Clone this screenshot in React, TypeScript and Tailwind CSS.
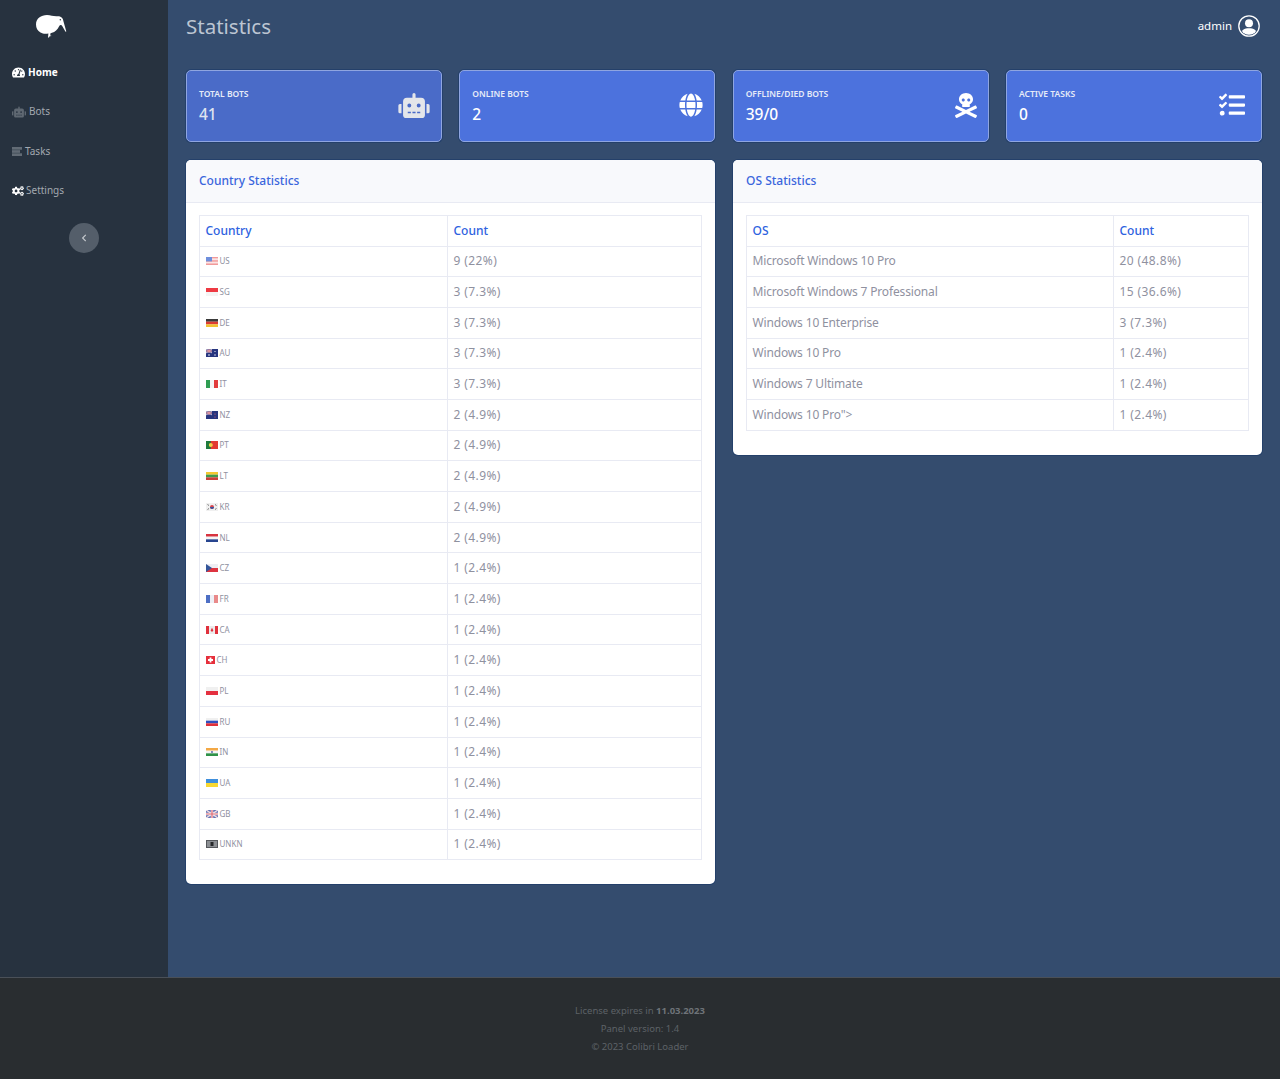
import type { ReactNode } from 'react';
import { FaTachometerAlt, FaRobot, FaCogs, FaChevronLeft, FaGlobe, FaSkullCrossbones, FaTasks } from 'react-icons/fa';

const countries = [
  ['US', '9 (22%)'],
  ['SG', '3 (7.3%)'],
  ['DE', '3 (7.3%)'],
  ['AU', '3 (7.3%)'],
  ['IT', '3 (7.3%)'],
  ['NZ', '2 (4.9%)'],
  ['PT', '2 (4.9%)'],
  ['LT', '2 (4.9%)'],
  ['KR', '2 (4.9%)'],
  ['NL', '2 (4.9%)'],
  ['CZ', '1 (2.4%)'],
  ['FR', '1 (2.4%)'],
  ['CA', '1 (2.4%)'],
  ['CH', '1 (2.4%)'],
  ['PL', '1 (2.4%)'],
  ['RU', '1 (2.4%)'],
  ['IN', '1 (2.4%)'],
  ['UA', '1 (2.4%)'],
  ['GB', '1 (2.4%)'],
  ['UNKN', '1 (2.4%)'],
];

const systems = [
  ['Microsoft Windows 10 Pro', '20 (48.8%)'],
  ['Microsoft Windows 7 Professional', '15 (36.6%)'],
  ['Windows 10 Enterprise', '3 (7.3%)'],
  ['Windows 10 Pro', '1 (2.4%)'],
  ['Windows 7 Ultimate', '1 (2.4%)'],
  ['Windows 10 Pro">', '1 (2.4%)'],
];

function hStripes(colors: string[]) {
  const h = 8 / colors.length;
  return colors.map((c, i) => <rect key={i} x="0" y={i * h} width="12" height={h + 0.05} fill={c} />);
}

function vStripes(colors: string[]) {
  const w = 12 / colors.length;
  return colors.map((c, i) => <rect key={i} x={i * w} y="0" width={w + 0.05} height="8" fill={c} />);
}

function UnionCorner() {
  return (
    <g>
      <rect x="0" y="0" width="6" height="4" fill="#5a6aa8" />
      <path d="M0 0L6 4M6 0L0 4" stroke="#f3d5d8" strokeWidth="0.7" />
      <path d="M3 0V4M0 2H6" stroke="#e58a90" strokeWidth="1" />
    </g>
  );
}

const flags: Record<string, ReactNode> = {
  US: (
    <>
      {hStripes(['#f19a9a', '#fbe3e3', '#f19a9a', '#fbe3e3', '#f19a9a'])}
      <rect width="6" height="4.4" fill="#6f8fdc" />
    </>
  ),
  SG: hStripes(['#ee3a43', '#f4f4f4']),
  DE: hStripes(['#3a3a3a', '#dc3c32', '#f2c230']),
  AU: (
    <>
      <rect width="12" height="8" fill="#27357f" />
      <UnionCorner />
      <circle cx="9" cy="2.5" r="0.6" fill="#fff" />
      <circle cx="9" cy="6" r="0.7" fill="#fff" />
      <circle cx="3" cy="6" r="0.8" fill="#fff" />
    </>
  ),
  IT: vStripes(['#2f9d52', '#f4f4f4', '#e23c3c']),
  NZ: (
    <>
      <rect width="12" height="8" fill="#27357f" />
      <UnionCorner />
      <circle cx="9" cy="3" r="0.6" fill="#e8686d" />
      <circle cx="9" cy="6" r="0.6" fill="#e8686d" />
    </>
  ),
  PT: (
    <>
      <rect width="12" height="8" fill="#e23b32" />
      <rect width="4.8" height="8" fill="#1f7a3c" />
      <circle cx="4.8" cy="4" r="2" fill="#f0cf4a" />
    </>
  ),
  LT: hStripes(['#f4c82f', '#3f9a4e', '#c8403a']),
  KR: (
    <>
      <rect width="12" height="8" fill="#f0f0f0" />
      <circle cx="6" cy="4" r="2" fill="#d9434c" />
      <path d="M4 4a2 2 0 0 0 4 0z" fill="#38549c" />
      <path d="M1.5 1.5l1.5 1M9 6.5l1.5-1M1.5 6.5l1.5-1M9 1.5l1.5 1" stroke="#555" strokeWidth="0.8" />
    </>
  ),
  NL: hStripes(['#d8333f', '#f4f4f4', '#27458f']),
  CZ: (
    <>
      {hStripes(['#eeeef3', '#dd3340'])}
      <path d="M0 0L6 4L0 8z" fill="#34569a" />
    </>
  ),
  FR: vStripes(['#4e6fc4', '#eef0f6', '#e98a8a']),
  CA: (
    <>
      {vStripes(['#e0313c', '#ececec', '#ececec', '#e0313c'])}
      <path d="M6 1.8l1.4 2.6L6 6 4.6 4.4z" fill="#e0313c" />
    </>
  ),
  PL: hStripes(['#f0f0f0', '#e4303f']),
  RU: hStripes(['#f0f0f0', '#2e4fc0', '#e0303a']),
  IN: (
    <>
      {hStripes(['#f3a845', '#f4f4f4', '#2f9248'])}
      <circle cx="6" cy="4" r="0.9" fill="#4a5aa0" />
    </>
  ),
  UA: hStripes(['#3f8fdc', '#f8d830']),
  GB: (
    <>
      <rect width="12" height="8" fill="#6273b4" />
      <path d="M0 0L12 8M12 0L0 8" stroke="#f2dfe2" strokeWidth="1.4" />
      <path d="M6 0V8M0 4H12" stroke="#f5f0f2" strokeWidth="2.4" />
      <path d="M6 0V8M0 4H12" stroke="#de6a75" strokeWidth="1.2" />
    </>
  ),
  UNKN: (
    <>
      <rect width="12" height="8" fill="#55585c" />
      <rect x="1" y="1" width="10" height="6" fill="#8c8f93" />
      <rect x="4.5" y="2" width="3" height="4" fill="#26282a" />
    </>
  ),
};

function Flag({ code }: { code: string }) {
  if (code === 'CH') {
    return (
      <svg viewBox="0 0 9 8" className="h-2 w-[9px] blur-[0.4px]">
        <rect width="9" height="8" fill="#e6303c" />
        <path d="M3.6 1.5h1.8v1.6H7v1.8H5.4v1.6H3.6V4.9H2V3.1h1.6z" fill="#fff" />
      </svg>
    );
  }
  return (
    <svg viewBox="0 0 12 8" className="h-2 w-3 blur-[0.4px]">
      {flags[code]}
    </svg>
  );
}

function KiwiLogo() {
  return (
    <svg viewBox="0 0 31 24" className="h-6 w-[31px]" fill="#fff">
      <path d="M0 10.500C0 4.500 5 1 11 1C15 1 17 2.500 21 2.300C24.500 2 27 3.500 27.500 7.500L30.300 17.500L29.500 17.800L26.500 12.500C25.300 10.500 24 10.800 23 12.500C21.500 15.500 19 18 16 18.800L14.500 19.200L14.200 21.500L15.800 22L13.600 22.300L13 23.500L12 23.500L12.400 19.500C9.500 19.800 7 20 4.500 18.500C1.500 16.800 0 14 0 10.500Z" />
      <circle cx="24.300" cy="5.800" r="0.700" fill="#27323f" />
    </svg>
  );
}

function UserAvatar() {
  return (
    <svg viewBox="0 0 22 22" className="h-[22px] w-[22px]">
      <defs>
        <clipPath id="avatar-clip">
          <circle cx="11" cy="11" r="8.800" />
        </clipPath>
      </defs>
      <circle cx="11" cy="11" r="10.200" fill="none" stroke="#fff" strokeWidth="1.300" />
      <g clipPath="url(#avatar-clip)" fill="#fff">
        <circle cx="11" cy="8.300" r="4" />
        <path d="M2 22C2 15.500 6 13.300 11 13.300C16 13.300 20 15.500 20 22Z" />
      </g>
    </svg>
  );
}

function TasksBars() {
  return (
    <svg viewBox="0 0 10 9" className="h-[9px] w-[10px]" fill="#626b75">
      <rect x="0" y="0" width="10" height="2.700" />
      <rect x="0" y="3.150" width="8" height="2.700" />
      <rect x="0" y="6.300" width="10" height="2.700" />
    </svg>
  );
}

function NavItem({ icon, label, active, gap }: { icon: ReactNode; label: string; active?: boolean; gap: string }) {
  return (
    <div className={`flex h-[39.3px] items-center pl-3 text-[10px] ${gap} ${active ? 'font-bold text-white' : 'text-[#a3a9b0]'}`}>
      {icon}
      <span>{label}</span>
    </div>
  );
}

function StatCard({ title, value, icon, dim }: { title: string; value: string; icon: ReactNode; dim?: boolean }) {
  return (
    <div className={`flex h-[72px] items-center justify-between rounded-[5px] border border-[#8fa5e0] pr-[11px] pl-3 shadow-[0_0_0_1px_#24406a] ${dim ? 'bg-[#4a6bc8]' : 'bg-[#4c72dd]'}`}>
      <div className={`pt-[2px] ${dim ? 'text-[#dfe4f0]' : 'text-white'}`}>
        <div className="text-[8.5px] font-semibold uppercase leading-3 text-[#e6ebf8]">{title}</div>
        <div className="mt-[2px] text-[15.500px] font-medium leading-6">{value}</div>
      </div>
      {icon}
    </div>
  );
}

function StatsTable({ head, firstCol, children }: { head: string; firstCol: string; children: ReactNode }) {
  return (
    <table className="w-full table-fixed border-collapse text-[12px] text-[#8f919f]">
      <colgroup>
        <col className={firstCol} />
        <col />
      </colgroup>
      <thead>
        <tr className="h-[31px] text-[#2e62e0]">
          <th className="border border-[#e8eaf3] px-[5.500px] text-left font-medium">{head}</th>
          <th className="border border-[#e8eaf3] px-[5.500px] text-left font-medium">Count</th>
        </tr>
      </thead>
      <tbody>{children}</tbody>
    </table>
  );
}

function Panel({ title, children }: { title: string; children: ReactNode }) {
  return (
    <div className="rounded-[5px] bg-white shadow-[0_0_0_1px_#24406a]">
      <div className="h-[43px] rounded-t-[5px] border-b border-[#e8eaf3] bg-[#f8f9fc] px-[13px] text-[12px] font-medium leading-[41px] text-[#3b66dc]">{title}</div>
      <div className="px-[13px] pt-3 pb-[24px]">{children}</div>
    </div>
  );
}

export default function App() {
  return (
    <div className="flex h-[1079px] flex-col font-['Noto_Sans','Lato',sans-serif]">
      <div className="flex h-[977px]">
        <aside className="w-[168px] shrink-0 bg-[#27323f]">
          <div className="flex h-[53px] pt-[14px] pl-9">
            <KiwiLogo />
          </div>
          <nav className="flex flex-col">
            <NavItem active gap="gap-[3px]" icon={<FaTachometerAlt className="size-[13px] text-white" />} label="Home" />
            <NavItem gap="gap-[3px]" icon={<FaRobot className="h-[12px] w-[14px] text-[#5f6872]" />} label="Bots" />
            <NavItem gap="gap-[3px]" icon={<TasksBars />} label="Tasks" />
            <NavItem gap="gap-[2px]" icon={<FaCogs className="size-[12px] text-white" />} label="Settings" />
          </nav>
          <div className="mt-[13px] flex justify-center">
            <button className="flex size-[30px] items-center justify-center rounded-full bg-[#545e6a]">
              <FaChevronLeft className="size-[8px] text-[#c3c7cc]" />
            </button>
          </div>
        </aside>
        <main className="flex-1 bg-[#344c6e] px-[18px]">
          <header className="flex h-[53px] items-center justify-between pb-[1px]">
            <h1 className="text-[20.500px] leading-none text-[#bcc5d2]">Statistics</h1>
            <div className="mr-[2px] flex items-center gap-[6px] text-[11.500px] text-white">
              <span>admin</span>
              <UserAvatar />
            </div>
          </header>
          <div className="mt-[17px] grid grid-cols-4 gap-x-[17.33px]">
            <StatCard dim title="Total Bots" value="41" icon={<FaRobot className="mb-[2px] h-[25px] w-8 text-[#e4e6ea]" />} />
            <StatCard title="Online Bots" value="2" icon={<FaGlobe className="mb-[2px] size-6 text-white" />} />
            <StatCard title="Offline/Died Bots" value="39/0" icon={<FaSkullCrossbones className="mb-[2px] h-[25px] w-[22px] text-white" />} />
            <StatCard title="Active Tasks" value="0" icon={<FaTasks className="mr-[5px] mb-[2px] size-[26px] text-white" />} />
          </div>
          <div className="mt-[17.500px] grid grid-cols-2 items-start gap-x-[18px]">
            <Panel title="Country Statistics">
              <StatsTable head="Country" firstCol="w-[248px]">
                {countries.map(([code, count]) => (
                  <tr key={code} className="h-[30.7px]">
                    <td className="border border-[#e8eaf3] px-[5.500px]">
                      <div className="flex items-center gap-[2px] text-[8px] text-[#8f919f]">
                        <Flag code={code} />
                        <span>{code}</span>
                      </div>
                    </td>
                    <td className="border border-[#e8eaf3] px-[5.500px] tracking-[0.4px]">{count}</td>
                  </tr>
                ))}
              </StatsTable>
            </Panel>
            <Panel title="OS Statistics">
              <StatsTable head="OS" firstCol="w-[367px]">
                {systems.map(([os, count]) => (
                  <tr key={os} className="h-[30.7px]">
                    <td className="border border-[#e8eaf3] px-[5.500px] tracking-[-0.15px]">{os}</td>
                    <td className="border border-[#e8eaf3] px-[5.500px] tracking-[0.4px]">{count}</td>
                  </tr>
                ))}
              </StatsTable>
            </Panel>
          </div>
        </main>
      </div>
      <footer className="flex h-[102px] flex-col items-center border-t border-[#4a5058] bg-[#292d30] pt-[23.500px] text-[9.500px] leading-[18px] text-[#5d6267]">
        <p>
          License expires in <b className="text-[#6e7378]">11.03.2023</b>
        </p>
        <p>Panel version: 1.4</p>
        <p>© 2023 Colibri Loader</p>
      </footer>
    </div>
  );
}
